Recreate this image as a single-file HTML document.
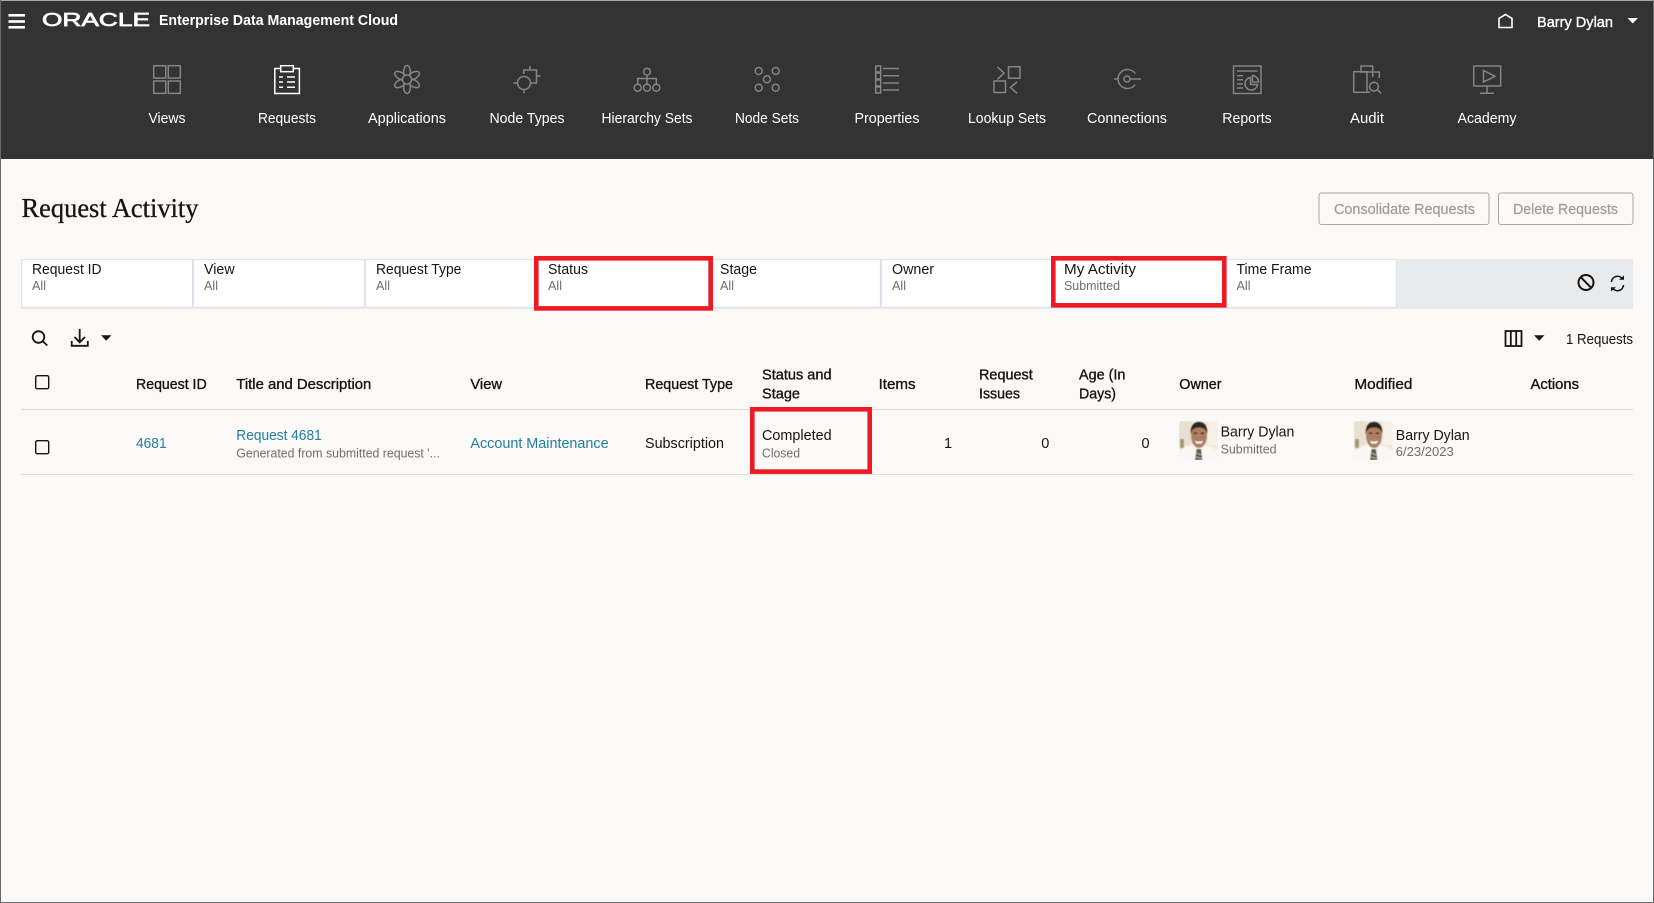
<!DOCTYPE html>
<html lang="en">
<head>
<meta charset="utf-8">
<title>Request Activity</title>
<style>
html,body{margin:0;padding:0;background:#faf9f8;width:1654px;height:903px;overflow:hidden}
svg{display:block;position:absolute;left:0;top:0}
text{font-family:"Liberation Sans",sans-serif;font-size:14.5px;fill:#161513}
.nav text{fill:#fff;text-anchor:middle}
.ic{fill:none;stroke:#858585;stroke-width:1.5}
.w{fill:#fff}
.h{stroke:#161513;stroke-width:.35}
.s{font-size:12.5px;fill:#6f6e6c}
.l{fill:#227e9e}
.dis{fill:#9d9c9a;stroke:#9d9c9a;stroke-width:.2}
.red{fill:none;stroke:#ed1c24;stroke-width:4.6}
</style>
</head>
<body>
<svg width="1654" height="903" viewBox="0 0 1654 903" xmlns="http://www.w3.org/2000/svg">
<defs>
<clipPath id="ac"><rect width="39" height="39" rx="3"/></clipPath>
<filter id="bl" x="-5%" y="-5%" width="110%" height="110%"><feGaussianBlur stdDeviation=".45"/></filter>
<g id="av" clip-path="url(#ac)">
  <g filter="url(#bl)">
  <rect width="39" height="39" fill="#efe9dd"/>
  <rect x="0" y="0" width="12" height="24" fill="#e9e0cf"/>
  <rect x="29" y="0" width="10" height="24" fill="#f5f1e9"/>
  <rect x="1" y="18" width="4" height="9" fill="#a8976e"/>
  <path d="M0 39V30L12 24H27L39 29V39Z" fill="#f8f7f4"/>
  <path d="M12 14C12 6 15 2 20 2S28 6 28 14C28 21 25 27 20 27S12 21 12 14Z" fill="#ad7f62"/>
  <path d="M11.5 13C11 4 15 .7 20 .7S29 4 28.5 13C27 8 24 6.5 20 6.5S13 8 11.5 13Z" fill="#2f2620"/>
  <path d="M16 19.5Q20 22 24 19.5L22.5 22.5H17.5Z" fill="#fff"/>
  <rect x="14.8" y="11.5" width="3.5" height="1.4" fill="#33231b"/>
  <rect x="21.7" y="11.5" width="3.5" height="1.4" fill="#33231b"/>
  <path d="M17.5 28H22L23.5 39H16Z" fill="#5f5849"/>
  <path d="M17 32L23 34M16.5 36L23.5 37.5" stroke="#bdb6a2" stroke-width="1"/>
  </g>
</g>
</defs>

<!-- Header -->
<rect x="0" y="0" width="1654" height="159" fill="#333"/>
<rect x="0" y="0" width="1654" height="1" fill="#a8a8a8"/>
<g fill="#fff">
  <rect x="8.5" y="14" width="16.5" height="2.6"/>
  <rect x="8.5" y="20.2" width="16.5" height="2.6"/>
  <rect x="8.5" y="26" width="16.5" height="2.6"/>
</g>
<text x="42" y="26" class="w" style="font-size:18.5px;stroke:#fff;stroke-width:.7" textLength="108" lengthAdjust="spacingAndGlyphs">ORACLE</text>
<text x="159" y="25" class="w" style="font-weight:bold" textLength="239" lengthAdjust="spacingAndGlyphs">Enterprise Data Management Cloud</text>
<path d="M1499 27.5V18.5L1505.5 14.5L1512 18.5V27.5Z" fill="none" stroke="#fff" stroke-width="1.6"/>
<text x="1537" y="27" class="w h" style="stroke:#fff" textLength="76" lengthAdjust="spacingAndGlyphs">Barry Dylan</text>
<path d="M1627.5 18H1638L1632.7 23.5Z" fill="#fff"/>

<!-- Nav icons -->
<g class="ic">
  <!-- Views -->
  <rect x="153.7" y="65.7" width="12" height="12.4"/><rect x="168.3" y="65.7" width="12" height="12.4"/>
  <rect x="153.7" y="81" width="12" height="12.4"/><rect x="168.3" y="81" width="12" height="12.4"/>
  <!-- Requests -->
  <g style="stroke:#fff">
    <rect x="274.8" y="68.5" width="24.6" height="25"/>
    <rect x="280.7" y="65.7" width="12.6" height="6" fill="#333"/>
    <path d="M279 77H283M287 77H295M279 82H283M287 82H295M279 87.3H283M287 87.3H295"/>
  </g>
  <!-- Applications -->
  <g transform="translate(407 79.5)">
    <ellipse cx="0" cy="-7.7" rx="3.4" ry="6.3"/>
    <ellipse cx="0" cy="7.7" rx="3.4" ry="6.3"/>
    <ellipse cx="0" cy="-7.7" rx="3.4" ry="6.3" transform="rotate(60)"/>
    <ellipse cx="0" cy="-7.7" rx="3.4" ry="6.3" transform="rotate(120)"/>
    <ellipse cx="0" cy="-7.7" rx="3.4" ry="6.3" transform="rotate(240)"/>
    <ellipse cx="0" cy="-7.7" rx="3.4" ry="6.3" transform="rotate(300)"/>
    <circle r="4.6" fill="#333"/>
  </g>
  <!-- Node Types -->
  <path d="M523.7 74V70H536.5V83H531M530 70V66M536.5 76H540.5M513.3 83H517.3M524 89.5V93.3"/>
  <circle cx="524" cy="83" r="6.5"/>
  <!-- Hierarchy Sets -->
  <circle cx="647" cy="71.7" r="3.4"/>
  <path d="M647 75V84M637.7 84V78.5H656.3V84"/>
  <circle cx="637.7" cy="87.7" r="3.5"/><circle cx="647" cy="87.7" r="3.5"/><circle cx="656.3" cy="87.7" r="3.5"/>
  <!-- Node Sets -->
  <circle cx="758.7" cy="71" r="3.5"/><circle cx="775.7" cy="71" r="3.5"/><circle cx="767" cy="79.3" r="3.5"/>
  <circle cx="758.7" cy="87.7" r="3.5"/><circle cx="775.7" cy="87.7" r="3.5"/>
  <!-- Properties -->
  <rect x="875.7" y="66" width="5" height="6"/><rect x="875.7" y="73" width="5" height="6"/>
  <rect x="875.7" y="80" width="5" height="6"/><rect x="875.7" y="87" width="5" height="6"/>
  <path d="M883 68.5H899M883 75.7H899M883 83H899M883 90H899"/>
  <!-- Lookup Sets -->
  <path d="M997.5 67L1004 73L997.5 79.3"/>
  <rect x="1008.5" y="66.7" width="11.5" height="11.5"/>
  <rect x="994" y="81" width="11.5" height="11.5"/>
  <path d="M1017 82L1010.5 87.5L1017 93.3"/>
  <!-- Connections -->
  <circle cx="1127" cy="79" r="3"/>
  <path d="M1135.3 73.5A9.5 9.5 0 1 0 1135.3 84.5M1114 79H1117.5M1130 79H1141"/>
  <!-- Reports -->
  <rect x="1233.5" y="66" width="27.5" height="27.5"/>
  <path d="M1237 71H1257.5M1237 75.7H1243M1237 79.7H1243M1237 84H1243M1237 88H1243"/>
  <path d="M1250.5 77.5A6.3 6.3 0 1 0 1257.5 84.5H1250.5Z"/>
  <path d="M1252.5 75.5A6.5 6.5 0 0 1 1258.5 82H1252.5Z"/>
  <!-- Audit -->
  <rect x="1353.7" y="71.7" width="13.3" height="20.6"/>
  <path d="M1361 71.7V66H1372.7V77M1360 72H1379.3V78M1367 92.3H1370"/>
  <circle cx="1374" cy="86.7" r="4.4"/>
  <path d="M1377.3 89.7L1381.3 93.5"/>
  <!-- Academy -->
  <rect x="1473.7" y="66" width="27" height="20"/>
  <path d="M1483.5 70.5L1495 76.3L1483.5 82Z"/>
  <path d="M1487 86V93M1480 93.3H1494"/>
</g>

<!-- Nav labels -->
<g class="nav">
  <text x="167" y="123" textLength="37" lengthAdjust="spacingAndGlyphs">Views</text>
  <text x="287" y="123" textLength="58" lengthAdjust="spacingAndGlyphs">Requests</text>
  <text x="407" y="123" textLength="78" lengthAdjust="spacingAndGlyphs">Applications</text>
  <text x="527" y="123" textLength="75" lengthAdjust="spacingAndGlyphs">Node Types</text>
  <text x="647" y="123" textLength="91" lengthAdjust="spacingAndGlyphs">Hierarchy Sets</text>
  <text x="767" y="123" textLength="64" lengthAdjust="spacingAndGlyphs">Node Sets</text>
  <text x="887" y="123" textLength="65" lengthAdjust="spacingAndGlyphs">Properties</text>
  <text x="1007" y="123" textLength="78" lengthAdjust="spacingAndGlyphs">Lookup Sets</text>
  <text x="1127" y="123" textLength="80" lengthAdjust="spacingAndGlyphs">Connections</text>
  <text x="1247" y="123" textLength="49.5" lengthAdjust="spacingAndGlyphs">Reports</text>
  <text x="1367" y="123" textLength="34" lengthAdjust="spacingAndGlyphs">Audit</text>
  <text x="1487" y="123" textLength="59" lengthAdjust="spacingAndGlyphs">Academy</text>
</g>

<!-- Title + buttons -->
<text x="21.5" y="217" style="font-family:'Liberation Serif',serif;font-size:27px;stroke:#161513;stroke-width:.3" textLength="177" lengthAdjust="spacingAndGlyphs">Request Activity</text>
<rect x="1319" y="193" width="170" height="31.5" rx="2.5" fill="none" stroke="#a9a8a6"/>
<rect x="1498.5" y="193" width="134.5" height="31.5" rx="2.5" fill="none" stroke="#a9a8a6"/>
<text x="1334" y="214" class="dis" textLength="141" lengthAdjust="spacingAndGlyphs">Consolidate Requests</text>
<text x="1513" y="214" class="dis" textLength="105" lengthAdjust="spacingAndGlyphs">Delete Requests</text>

<!-- Filter bar -->
<rect x="21" y="259" width="1612" height="50" fill="#e9eaec"/>
<g fill="#fff" stroke="#dde3ea" stroke-width="1.2">
  <rect x="21.6" y="259.6" width="171" height="47.8"/>
  <rect x="193.5" y="259.6" width="171" height="47.8"/>
  <rect x="365.5" y="259.6" width="171" height="47.8"/>
  <rect x="537.5" y="259.6" width="171" height="47.8"/>
  <rect x="709.5" y="259.6" width="171" height="47.8"/>
  <rect x="881.5" y="259.6" width="171" height="47.8"/>
  <rect x="1053.5" y="259.6" width="171" height="47.8"/>
  <rect x="1225.5" y="259.6" width="171" height="47.8"/>
</g>
<text x="32" y="274" textLength="69.6" lengthAdjust="spacingAndGlyphs">Request ID</text><text x="32" y="290" class="s" textLength="14" lengthAdjust="spacingAndGlyphs">All</text>
<text x="204" y="274" textLength="30.6" lengthAdjust="spacingAndGlyphs">View</text><text x="204" y="290" class="s" textLength="14" lengthAdjust="spacingAndGlyphs">All</text>
<text x="376" y="274" textLength="85.4" lengthAdjust="spacingAndGlyphs">Request Type</text><text x="376" y="290" class="s" textLength="14" lengthAdjust="spacingAndGlyphs">All</text>
<text x="548" y="274" textLength="40" lengthAdjust="spacingAndGlyphs">Status</text><text x="548" y="290" class="s" textLength="14" lengthAdjust="spacingAndGlyphs">All</text>
<text x="720" y="274" textLength="37" lengthAdjust="spacingAndGlyphs">Stage</text><text x="720" y="290" class="s" textLength="14" lengthAdjust="spacingAndGlyphs">All</text>
<text x="892" y="274" textLength="42" lengthAdjust="spacingAndGlyphs">Owner</text><text x="892" y="290" class="s" textLength="14" lengthAdjust="spacingAndGlyphs">All</text>
<text x="1064" y="274" textLength="72" lengthAdjust="spacingAndGlyphs">My Activity</text><text x="1064" y="290" class="s" textLength="56" lengthAdjust="spacingAndGlyphs">Submitted</text>
<text x="1236.5" y="274" textLength="75" lengthAdjust="spacingAndGlyphs">Time Frame</text><text x="1236.5" y="290" class="s" textLength="14" lengthAdjust="spacingAndGlyphs">All</text>

<!-- Filter action icons -->
<g fill="none" stroke="#161513">
  <circle cx="1586" cy="282.5" r="7.5" stroke-width="2"/>
  <path d="M1580.8 277.2L1591.2 287.8" stroke-width="2"/>
  <path d="M1611.5 282A6 6 0 0 1 1622.5 279M1623.5 285A6 6 0 0 1 1612.5 288" stroke-width="1.6"/>
</g>
<path d="M1619 279.8H1624V275.5ZM1616 287.2H1611V291.5Z" fill="#161513"/>

<!-- Toolbar icons -->
<g fill="none" stroke="#161513" stroke-width="1.8">
  <circle cx="38.5" cy="337" r="5.8"/>
  <path d="M42.8 341.3L47.3 345.5"/>
  <path d="M79.7 329V342M74.5 337L79.7 342.3L85 337"/>
  <path d="M71.7 341V345.8H87.8V341"/>
  <rect x="1505.5" y="331" width="16" height="15"/>
  <path d="M1510.8 331V346M1516.2 331V346"/>
</g>
<path d="M101 335.3H111.4L106.2 340.7ZM1534 335.3H1544.5L1539.2 340.7Z" fill="#161513"/>
<text x="1566" y="344" textLength="67" lengthAdjust="spacingAndGlyphs">1 Requests</text>

<!-- Table header -->
<rect x="35.7" y="375.7" width="13" height="13" rx="1.5" fill="none" stroke="#161513" stroke-width="1.4"/>
<g class="hd">
  <text class="h" x="136" y="389" textLength="70.7" lengthAdjust="spacingAndGlyphs">Request ID</text>
  <text class="h" x="236.3" y="389" textLength="135" lengthAdjust="spacingAndGlyphs">Title and Description</text>
  <text class="h" x="470.4" y="389" textLength="31.6" lengthAdjust="spacingAndGlyphs">View</text>
  <text class="h" x="645" y="389" textLength="88" lengthAdjust="spacingAndGlyphs">Request Type</text>
  <text class="h" x="762" y="379.3" textLength="69.6" lengthAdjust="spacingAndGlyphs">Status and</text>
  <text class="h" x="762" y="398.3" textLength="38" lengthAdjust="spacingAndGlyphs">Stage</text>
  <text class="h" x="878.6" y="389" textLength="37" lengthAdjust="spacingAndGlyphs">Items</text>
  <text class="h" x="979" y="379.3" textLength="53.8" lengthAdjust="spacingAndGlyphs">Request</text>
  <text class="h" x="979" y="398.3" textLength="41" lengthAdjust="spacingAndGlyphs">Issues</text>
  <text class="h" x="1079" y="379.3" textLength="46.4" lengthAdjust="spacingAndGlyphs">Age (In</text>
  <text class="h" x="1079" y="398.3" textLength="37" lengthAdjust="spacingAndGlyphs">Days)</text>
  <text class="h" x="1179.3" y="389" textLength="42.2" lengthAdjust="spacingAndGlyphs">Owner</text>
  <text class="h" x="1354.4" y="389" textLength="58" lengthAdjust="spacingAndGlyphs">Modified</text>
  <text class="h" x="1530.5" y="389" textLength="48.5" lengthAdjust="spacingAndGlyphs">Actions</text>
</g>
<rect x="21" y="409" width="1612" height="1" fill="#dcdbd9"/>
<rect x="21" y="474" width="1612" height="1" fill="#dcdbd9"/>

<!-- Row -->
<rect x="35.7" y="440.7" width="13" height="13" rx="1.5" fill="none" stroke="#161513" stroke-width="1.4"/>
<text x="136" y="448" class="l" textLength="30.6" lengthAdjust="spacingAndGlyphs">4681</text>
<text x="236.3" y="440" class="l" textLength="85.4" lengthAdjust="spacingAndGlyphs">Request 4681</text>
<text x="236.3" y="457.3" class="s" textLength="203.6" lengthAdjust="spacingAndGlyphs">Generated from submitted request '...</text>
<text x="470.4" y="448" class="l" textLength="138.2" lengthAdjust="spacingAndGlyphs">Account Maintenance</text>
<text x="645" y="448" textLength="79" lengthAdjust="spacingAndGlyphs">Subscription</text>
<text x="762" y="440" textLength="69.6" lengthAdjust="spacingAndGlyphs">Completed</text>
<text x="762" y="457.3" class="s" textLength="38" lengthAdjust="spacingAndGlyphs">Closed</text>
<text x="944" y="448">1</text>
<text x="1041.3" y="448">0</text>
<text x="1141.5" y="448">0</text>
<use href="#av" transform="translate(1179 421)"/>
<text x="1220.6" y="436.7" textLength="73.8" lengthAdjust="spacingAndGlyphs">Barry Dylan</text>
<text x="1220.6" y="453.3" class="s" textLength="56" lengthAdjust="spacingAndGlyphs">Submitted</text>
<use href="#av" transform="translate(1354 421)"/>
<text x="1395.8" y="440" textLength="73.8" lengthAdjust="spacingAndGlyphs">Barry Dylan</text>
<text x="1395.8" y="456" class="s" textLength="58" lengthAdjust="spacingAndGlyphs">6/23/2023</text>

<!-- Red highlight boxes -->
<rect class="red" x="536.3" y="258.3" width="174.4" height="50.1"/>
<rect class="red" x="1053.3" y="258.3" width="171" height="47"/>
<rect class="red" x="752.3" y="409.3" width="117.4" height="62.3"/>

<!-- Window frame -->
<rect x="0" y="0" width="1" height="903" fill="#6a6a6a"/>
<rect x="1653" y="0" width="1" height="903" fill="#6a6a6a"/>
<rect x="0" y="902" width="1654" height="1" fill="#6a6a6a"/>
</svg>
</body>
</html>
